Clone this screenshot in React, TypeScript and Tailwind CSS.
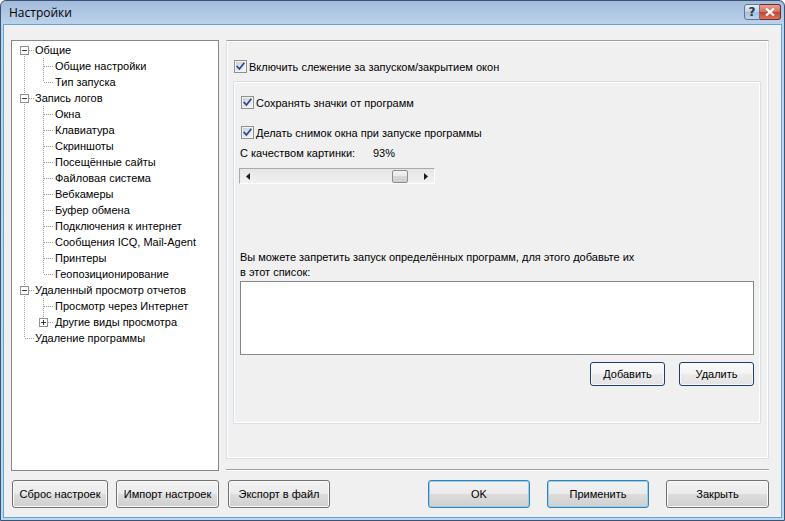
import React from "react";

type TreeRow = {
  label: string;
  level: 0 | 1;
  box?: "minus" | "plus";
  first?: boolean;
  last?: boolean;
};

const TREE: TreeRow[] = [
  { label: "Общие", level: 0, box: "minus", first: true },
  { label: "Общие настройки", level: 1 },
  { label: "Тип запуска", level: 1, last: true },
  { label: "Запись логов", level: 0, box: "minus" },
  { label: "Окна", level: 1 },
  { label: "Клавиатура", level: 1 },
  { label: "Скриншоты", level: 1 },
  { label: "Посещённые сайты", level: 1 },
  { label: "Файловая система", level: 1 },
  { label: "Вебкамеры", level: 1 },
  { label: "Буфер обмена", level: 1 },
  { label: "Подключения к интернет", level: 1 },
  { label: "Сообщения ICQ, Mail-Agent", level: 1 },
  { label: "Принтеры", level: 1 },
  { label: "Геопозиционирование", level: 1, last: true },
  { label: "Удаленный просмотр отчетов", level: 0, box: "minus" },
  { label: "Просмотр через Интернет", level: 1 },
  { label: "Другие виды просмотра", level: 1, box: "plus", last: true },
  { label: "Удаление программы", level: 0, last: true },
];

// one 19px column of tree connector lines, optionally with an expander box
function LineCell({ up, down, right, box }: { up?: boolean; down?: boolean; right?: boolean; box?: "minus" | "plus" }) {
  return (
    <svg width="19" height="16" className="shrink-0" shapeRendering="crispEdges">
      <g stroke="#a0a0a0" strokeWidth="1" strokeDasharray="1 1">
        {up && <line x1="9.5" y1="0" x2="9.5" y2="8" />}
        {down && <line x1="9.5" y1="8" x2="9.5" y2="16" />}
        {right && <line x1="10" y1="8.5" x2="19" y2="8.5" />}
      </g>
      {box && (
        <g>
          <rect x="5.5" y="4.5" width="8" height="8" fill="#ffffff" stroke="#919191" />
          <line x1="7" y1="8.5" x2="12" y2="8.5" stroke="#3a3a3a" />
          {box === "plus" && <line x1="9.5" y1="6" x2="9.5" y2="11" stroke="#3a3a3a" />}
        </g>
      )}
    </svg>
  );
}

function Tree() {
  return (
    <div className="w-[208px] h-[431px] shrink-0 border border-[#828790] bg-white pl-[3px] pt-[1px] overflow-hidden">
      {TREE.map((r) => (
        <div key={r.label} className="flex items-center h-[16px]">
          {r.level === 0 ? (
            <>
              <LineCell up={!r.first} down={!r.last} right box={r.box} />
              <span className="ml-[1px] whitespace-nowrap text-[11px] leading-[16px] text-black">{r.label}</span>
            </>
          ) : (
            <>
              <LineCell up down />
              <LineCell up down={!r.last} right box={r.box} />
              <span className="ml-[2px] whitespace-nowrap text-[11px] leading-[16px] text-black">{r.label}</span>
            </>
          )}
        </div>
      ))}
    </div>
  );
}

function CheckBox() {
  return (
    <svg width="13" height="13" className="shrink-0">
      <defs>
        <linearGradient id="cbg" x1="0" y1="0" x2="1" y2="1">
          <stop offset="0" stopColor="#cbcfd5" />
          <stop offset="1" stopColor="#f7f7f7" />
        </linearGradient>
      </defs>
      <rect x="0.5" y="0.5" width="12" height="12" fill="#f4f4f4" stroke="#8e8f8f" />
      <rect x="2" y="2" width="9" height="9" fill="url(#cbg)" />
      <path d="M3.2 6.6 L5.4 9 L9.8 3.4" fill="none" stroke="#2b4592" strokeWidth="1.7" strokeLinecap="square" />
    </svg>
  );
}

function Check({ label, className }: { label: string; className: string }) {
  return (
    <div className={`flex items-center h-[13px] ${className}`}>
      <CheckBox />
      <span className="ml-[2px] whitespace-nowrap text-[11px] leading-[16px]">{label}</span>
    </div>
  );
}

function Button({ label, className, kind = "normal" }: { label: string; className: string; kind?: "normal" | "default" | "dark" }) {
  const border =
    kind === "default"
      ? "border-[#3c7fb1] shadow-[inset_0_0_0_1px_#8fd3f4]"
      : kind === "dark"
      ? "border-[#1d3e6b] shadow-[inset_0_0_0_1px_#f8f8f8]"
      : "border-[#707070] shadow-[inset_0_0_0_1px_#fbfbfb]";
  const bg =
    kind === "dark"
      ? "bg-[linear-gradient(#fafafa,#f3f3f3_50%,#ebebeb_50%,#e3e3e3)]"
      : "bg-[linear-gradient(#f2f2f2,#ebebeb_50%,#dddddd_50%,#cfcfcf)]";
  return (
    <div className={`flex items-center justify-center shrink-0 rounded-[3px] border ${border} ${bg} ${className}`}>
      <span className="whitespace-nowrap text-[11px] leading-[16px] text-black">{label}</span>
    </div>
  );
}

function ScrollBar() {
  return (
    <div className="flex w-[196px] h-[16px] ml-[5px] mt-[7px] border-t border-l border-[#a9a9a9] border-b border-r border-b-white border-r-white bg-[linear-gradient(#e6e6e6,#f1f1f1)]">
      <div className="w-[16px] flex items-center justify-center">
        <svg width="4" height="7"><path d="M4 0 L0 3.5 L4 7 Z" fill="#1a1a1a" /></svg>
      </div>
      <div className="flex-1 flex items-center">
        <div className="ml-[136px] w-[16px] h-[13px] rounded-[2px] border border-[#8d8d8d] bg-[linear-gradient(#f4f4f4,#e8e8e8_50%,#d6d6d6_50%,#cfcfcf)]" />
      </div>
      <div className="w-[16px] flex items-center justify-center">
        <svg width="4" height="7"><path d="M0 0 L4 3.5 L0 7 Z" fill="#1a1a1a" /></svg>
      </div>
    </div>
  );
}

export default function App() {
  return (
    <div className="w-[785px] h-[521px] flex flex-col border border-[#3b5474] rounded-t-[6px] bg-[linear-gradient(#a2bcdb,#bdd3ec_24px,#c1d6ee)] px-[2px] pb-[2px] font-['Liberation_Sans',Arial,sans-serif] text-black overflow-hidden">
      {/* Title bar */}
      <div className="h-[23px] flex items-center shrink-0">
        <span className="ml-[6px] text-[12px] font-['Open_Sans','Liberation_Sans',sans-serif] text-black">Настройки</span>
        <div className="ml-auto mr-[1px] mt-[-1px] flex">
          <div className="w-[16px] h-[16px] flex items-center justify-center border border-[#5f7595] rounded-l-[3px] bg-[linear-gradient(#e4ecf6,#c3d3e6_50%,#a9bfd9_50%,#bfd2e8)]">
            <span className="text-[12px] leading-none font-bold text-[#27374d] font-['DejaVu_Sans',sans-serif]">?</span>
          </div>
          <div className="w-[21px] h-[16px] flex items-center justify-center border border-l-0 border-[#6e2b2b] rounded-r-[3px] bg-[linear-gradient(#e8a492,#d26d5b_50%,#c0442f_50%,#d8765e)]">
            <svg width="10" height="8" viewBox="0 0 10 8">
              <path d="M1 0.5 L9 7.5 M9 0.5 L1 7.5" stroke="#ffffff" strokeWidth="2.2" />
            </svg>
          </div>
        </div>
      </div>

      {/* Client area */}
      <div className="flex-1 flex flex-col border border-[#5aa9de] bg-[#f0f0f0] pl-[7px] pt-[15px]">
        <div className="flex">
          <Tree />

          <div className="ml-[7px] w-[543px] h-[431px] flex flex-col">
            {/* outer page */}
            <div className="h-[419px] flex flex-col border border-[#d5dfe5] border-t-[#a0a0a0] shadow-[inset_1px_1px_0_#ffffff,inset_-1px_-1px_0_#ffffff]">
              <Check label="Включить слежение за запуском/закрытием окон" className="ml-[7px] mt-[19px]" />

              {/* inner group */}
              <div className="ml-[6px] mt-[8px] w-[528px] h-[343px] flex flex-col border border-[#d5dfe5] rounded-[2px] shadow-[inset_1px_1px_0_#ffffff,inset_-1px_-1px_0_#ffffff]">
                <Check label="Сохранять значки от программ" className="ml-[7px] mt-[14px]" />
                <Check label="Делать снимок окна при запуске программы" className="ml-[7px] mt-[17px]" />
                <div className="flex ml-[6px] mt-[6px] h-[16px] items-center text-[11px]">
                  <span className="w-[133px] whitespace-nowrap">С качеством картинки:</span>
                  <span>93%</span>
                </div>
                <ScrollBar />
                <div className="ml-[6px] mt-[66px] text-[11px] leading-[15px]">
                  <div>Вы можете запретить запуск определённых программ, для этого добавьте их</div>
                  <div>в этот список:</div>
                </div>
                <div className="ml-[6px] mt-[1px] w-[514px] h-[74px] border border-[#828790] bg-white" />
                <div className="ml-[6px] mt-[7px] w-[514px] flex justify-end gap-[14px]">
                  <Button label="Добавить" kind="dark" className="w-[75px] h-[24px]" />
                  <Button label="Удалить" kind="dark" className="w-[75px] h-[24px]" />
                </div>
              </div>
            </div>
            <div className="mt-[10px] h-[2px] border-t border-[#a0a0a0] border-b border-b-white" />
          </div>
        </div>

        {/* bottom button row */}
        <div className="flex mt-[9px] ml-[1px]">
          <Button label="Сброс настроек" className="w-[96px] h-[28px]" />
          <Button label="Импорт настроек" className="ml-[8px] w-[103px] h-[28px]" />
          <Button label="Экспорт в файл" className="ml-[9px] w-[102px] h-[28px]" />
          <Button label="OK" kind="default" className="ml-[98px] w-[102px] h-[28px]" />
          <Button label="Применить" kind="default" className="ml-[17px] w-[102px] h-[28px]" />
          <Button label="Закрыть" className="ml-[17px] w-[103px] h-[28px]" />
        </div>
      </div>
    </div>
  );
}
